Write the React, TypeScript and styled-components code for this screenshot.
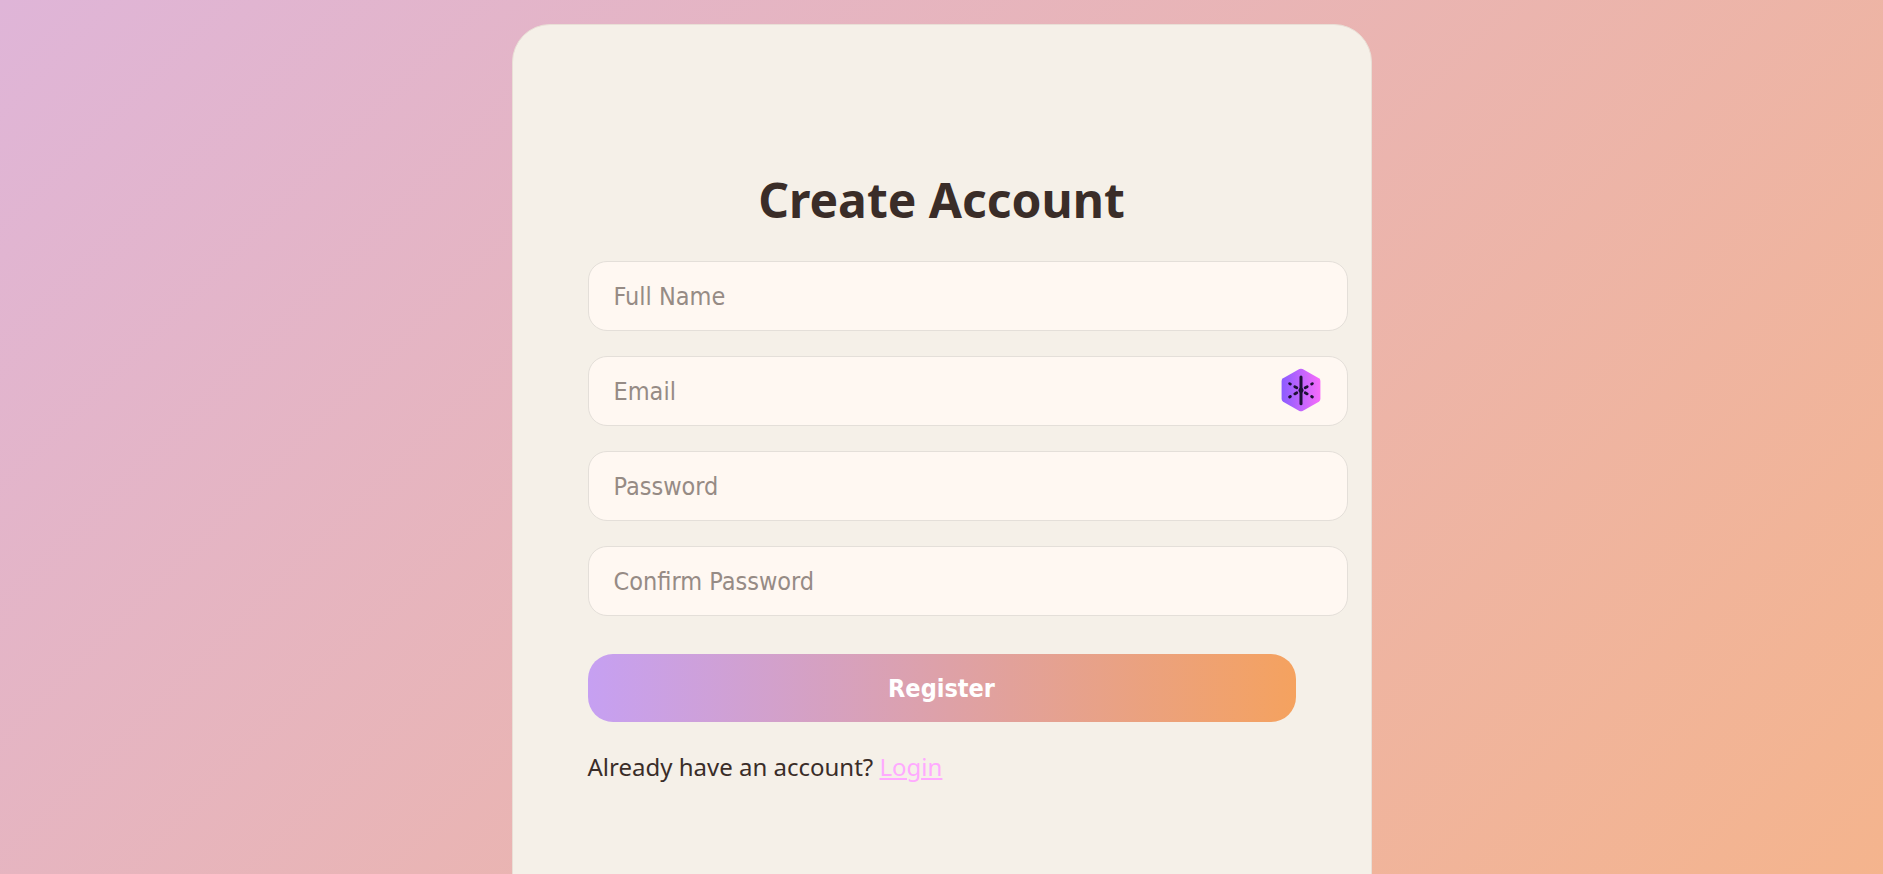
import React from "react";
import styled, { createGlobalStyle } from "styled-components";

const GlobalStyle = createGlobalStyle`
  html {
    scrollbar-width: none;
  }

  body {
    margin: 0;
    font-family: "Segoe UI", "Noto Sans", sans-serif;
    color: #3a2d28;
  }
`;

const Page = styled.main`
  box-sizing: border-box;
  min-height: 100vh;
  padding: 24px;
  display: flex;
  justify-content: center;
  background: linear-gradient(135deg, #dfb5d8, #f5b48b);
`;

const Card = styled.form`
  box-sizing: border-box;
  align-self: flex-start;
  width: 100%;
  max-width: 860px;
  padding: 143px 75px;
  border: 1px solid #e9dfd6;
  border-radius: 38px;
  background: #f5f0e8;
`;

const Title = styled.h1`
  margin: 0 0 29px;
  font-size: 48px;
  line-height: 64px;
  font-weight: 700;
  text-align: center;
`;

const Fields = styled.div`
  display: flex;
  flex-direction: column;
  gap: 25px;
  margin-bottom: 38px;
`;

const Field = styled.div`
  position: relative;
  display: flex;
  width: calc(100% + 52px);
`;

const Input = styled.input`
  box-sizing: border-box;
  width: 100%;
  height: 70px;
  padding: 0 25px;
  border: 1px solid #e4dfd9;
  border-radius: 19px;
  outline: none;
  background: #fff8f2;
  color: #3a2d28;
  font-family: Tahoma, "DejaVu Sans Condensed", sans-serif;
  font-size: 25px;

  &::placeholder {
    color: #968b85;
    opacity: 1;
  }
`;

const FieldIcon = styled.svg`
  position: absolute;
  top: 12px;
  right: 27px;
  width: 40px;
  height: 44px;
`;

const RegisterButton = styled.button`
  display: block;
  width: 100%;
  height: 68px;
  margin: 0 0 29px;
  padding: 0;
  border: 0;
  border-radius: 25px;
  background: linear-gradient(90deg, #c6a0f2, #f5a25f);
  color: #fff;
  font-family: Tahoma, "DejaVu Sans Condensed", sans-serif;
  font-size: 25px;
  font-weight: 700;
  cursor: pointer;
`;

const LoginPrompt = styled.p`
  margin: 0;
  font-size: 24px;
  line-height: 32px;
`;

const LoginLink = styled.a`
  color: #ffaaff;
  text-decoration: underline;
`;

const fields = [
  { id: "name", label: "Full Name", type: "text" },
  { id: "email", label: "Email", type: "email" },
  { id: "password", label: "Password", type: "password" },
  { id: "confirm", label: "Confirm Password", type: "password" },
];

function AliasIcon() {
  return (
    <FieldIcon viewBox="0 0 40 44" aria-hidden="true">
      <defs>
        <linearGradient id="alias-fill" x1="0" x2="1" y1="0" y2="0">
          <stop offset="0" stopColor="#8b5cff" />
          <stop offset="1" stopColor="#f76cfb" />
        </linearGradient>
      </defs>
      <path
        d="M18.4 1.1Q20 .2 21.6 1.1L37.9 10.3Q39.4 11.2 39.4 12.9V31.1Q39.4 32.8 37.9 33.7L21.6 42.9Q20 43.8 18.4 42.9L2.1 33.7Q.6 32.8 .6 31.1V12.9Q.6 11.2 2.1 10.3Z"
        fill="url(#alias-fill)"
      />
      <g stroke="#1d1135" strokeWidth="3" strokeLinecap="round">
        <path d="M20 9V35.8" />
        <path
          d="M8.6 15.6l.8.5M13.8 18.7l2 1.1M31.4 15.6l-.8.5M26.2 18.7l-2 1.1M8.6 29l.8-.5M13.8 25.9l2-1.1M31.4 29l-.8-.5M26.2 25.9l-2-1.1"
          strokeWidth="2.8"
        />
      </g>
      <circle cx="20" cy="22.3" r="2.5" fill="#1d1135" />
    </FieldIcon>
  );
}

export default function App() {
  return (
    <>
      <GlobalStyle />
      <Page>
        <Card onSubmit={(event) => event.preventDefault()}>
          <Title>Create Account</Title>
          <Fields>
            {fields.map(({ id, label, type }) => (
              <Field key={id}>
                <Input id={id} name={id} type={type} placeholder={label} aria-label={label} />
                {id === "email" && <AliasIcon />}
              </Field>
            ))}
          </Fields>
          <RegisterButton type="submit">Register</RegisterButton>
          <LoginPrompt>
            Already have an account? <LoginLink href="#login">Login</LoginLink>
          </LoginPrompt>
        </Card>
      </Page>
    </>
  );
}
